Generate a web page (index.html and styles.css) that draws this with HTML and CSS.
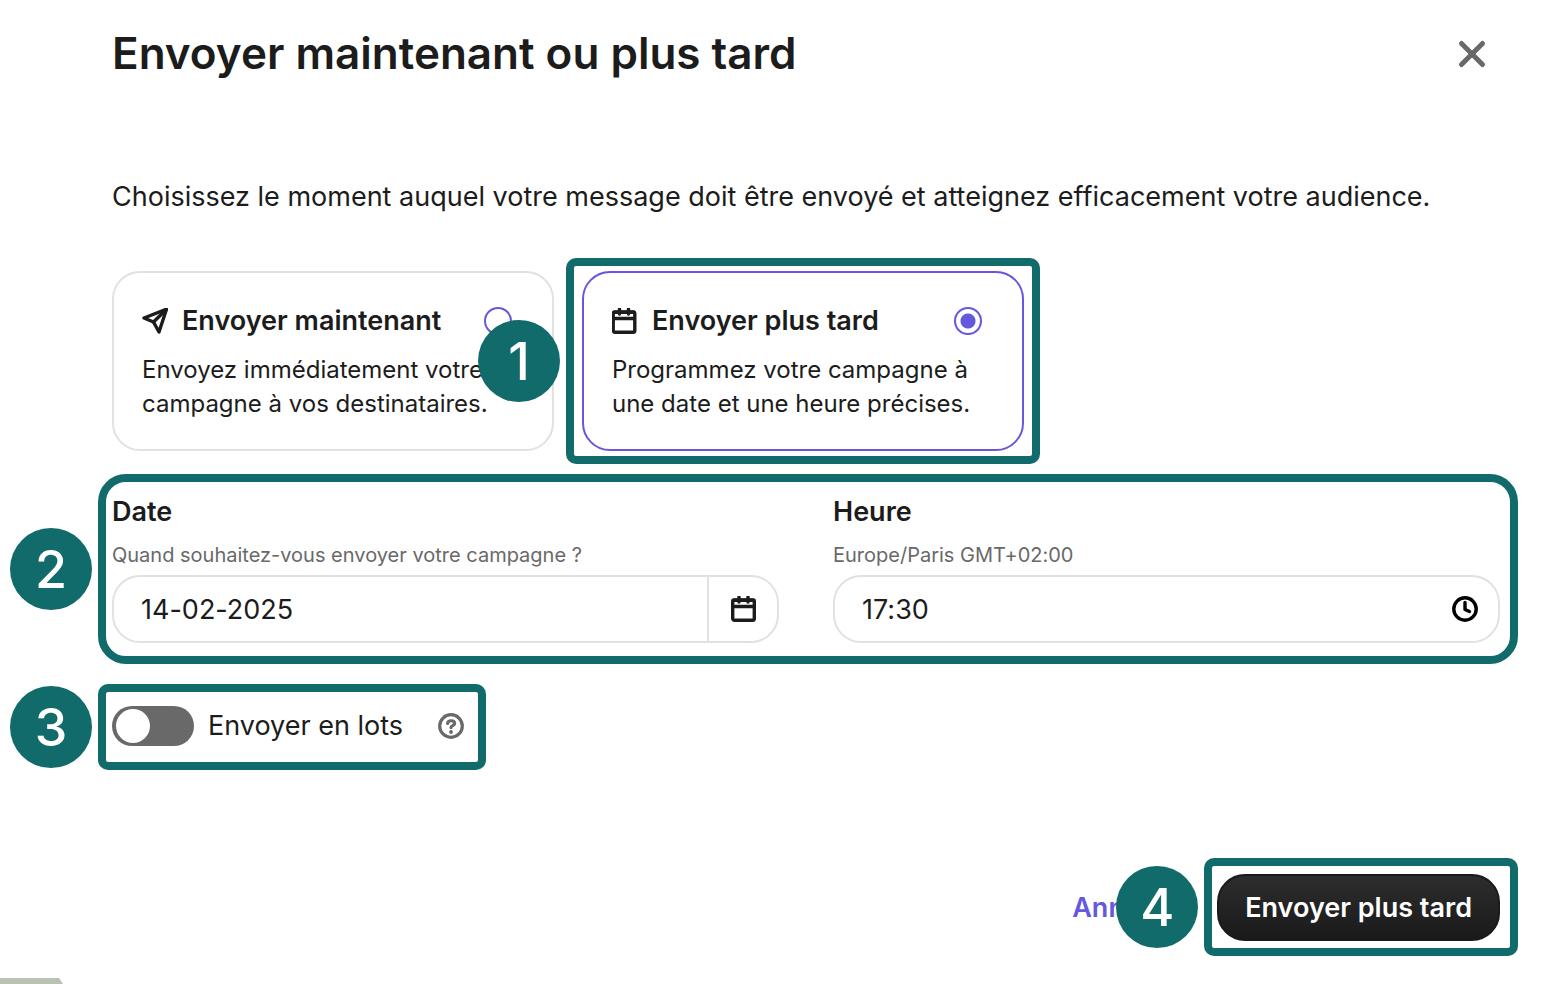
FILE: index.html
```
<!DOCTYPE html>
<html lang="fr">
<head>
    <meta charset="UTF-8">
    <meta name="viewport" content="width=device-width, initial-scale=1.0">
    <title>Envoyer maintenant ou plus tard</title>
    <link rel="stylesheet" href="styles.css">
</head>
<body>

    <form class="dialog">
        <header class="header">
            <h1 class="title">Envoyer maintenant ou plus tard</h1>
            <button type="button" class="close" aria-label="Fermer">
                <svg width="26" height="26" viewBox="0 0 26 26" fill="none" stroke="#696969" stroke-width="5" stroke-linecap="round">
                    <path d="M2.500 3.500 23.500 24.500M23.500 3.500 2.500 24.500"/>
                </svg>
            </button>
        </header>

        <p class="intro">Choisissez le moment auquel votre message doit être envoyé et atteignez efficacement votre audience.</p>

        <div class="options">
            <label class="card">
                <span class="card-head">
                    <svg class="icon" viewBox="0 0 26 26" fill="none" stroke="#1c1c1c" stroke-width="3.400" stroke-linejoin="round" stroke-linecap="round">
                        <path d="M2 10 24.500 1.200 17 24 11.500 14Z"/>
                        <path d="M11.500 14 24 1.700"/>
                    </svg>
                    <span class="card-title">Envoyer maintenant</span>
                    <input type="radio" name="moment" class="radio">
                </span>
                <span class="card-text">Envoyez immédiatement votre campagne à vos destinataires.</span>
                <span class="badge badge-card">1</span>
            </label>

            <label class="card selected">
                <span class="card-head">
                    <svg class="icon" viewBox="0 0 26 26" fill="none" stroke="#1c1c1c" stroke-width="3.400" stroke-linecap="round">
                        <rect x="1.200" y="4" width="21.600" height="20.300" rx="1.800"/>
                        <path d="M2 4.300H22M2 10.500H22M7.500 1V6M16.500 1V6"/>
                    </svg>
                    <span class="card-title">Envoyer plus tard</span>
                    <input type="radio" name="moment" class="radio" checked>
                </span>
                <span class="card-text">Programmez votre campagne à une date et une heure précises.</span>
                <span class="frame frame-card"></span>
            </label>
        </div>

        <div class="schedule">
            <div class="field">
                <label class="label" for="date">Date</label>
                <span class="hint">Quand souhaitez-vous envoyer votre campagne ?</span>
                <div class="input-box">
                    <input type="text" id="date" class="input" value="14-02-2025">
                    <button type="button" class="picker" aria-label="Calendrier">
                        <svg class="icon" viewBox="0 0 26 26" fill="none" stroke="#1c1c1c" stroke-width="3.400" stroke-linecap="round">
                            <rect x="2.700" y="4" width="21.600" height="20.300" rx="1.800"/>
                            <path d="M3 4.300H24M3 10.500H24M9 1V6M18 1V6"/>
                        </svg>
                    </button>
                </div>
            </div>
            <div class="field">
                <label class="label" for="heure">Heure</label>
                <span class="hint">Europe/Paris GMT+02:00</span>
                <div class="input-box">
                    <input type="text" id="heure" class="input" value="17:30">
                    <svg class="icon clock" viewBox="0 0 26 26" fill="none" stroke="#000" stroke-width="3.400" stroke-linecap="round" stroke-linejoin="round">
                        <circle cx="13" cy="13" r="11.200"/>
                        <path d="M13 6.500V13.500L17.500 15.500"/>
                    </svg>
                </div>
            </div>
            <span class="frame frame-schedule"></span>
            <span class="badge badge-left">2</span>
        </div>

        <div class="batch">
            <input type="checkbox" id="lots" class="toggle">
            <label class="batch-label" for="lots">Envoyer en lots</label>
            <button type="button" class="help" aria-label="Aide">
                <svg class="icon" viewBox="0 0 26 26" fill="none" stroke="#696969" stroke-width="3.200" stroke-linecap="round" stroke-linejoin="round">
                    <circle cx="13" cy="13" r="11.300"/>
                    <path d="M9.600 10.500C10 6.800 16.600 6.800 16.600 10.500C16.600 12.800 13 12.600 13 14.600"/>
                    <circle cx="13" cy="19" r="1.900" fill="#696969" stroke="none"/>
                </svg>
            </button>
            <span class="frame frame-batch"></span>
            <span class="badge badge-left">3</span>
        </div>

        <footer class="footer">
            <button type="button" class="cancel">Annuler</button>
            <div class="submit-wrap">
                <button type="submit" class="submit">Envoyer plus tard</button>
                <span class="frame frame-submit"></span>
                <span class="badge badge-submit">4</span>
            </div>
        </footer>
    </form>

    <div class="corner"></div>

</body>
</html>
```
FILE: styles.css
```
* {
    box-sizing: border-box;
}
body {
    margin: 0;
    min-height: 100vh;
    position: relative;
    overflow: hidden;
    background: #fff;
    color: #1c1c1c;
    font-family: Inter, "Liberation Sans", sans-serif;
    font-size: 27px;
    font-variant-ligatures: none;
}
button {
    padding: 0;
    border: none;
    background: none;
    font: inherit;
    cursor: pointer;
}
.dialog {
    padding: 28px 42px 0 112px;
}
.icon {
    display: block;
    flex: none;
    width: 26px;
    height: 26px;
}

/* header */
.header {
    display: flex;
    align-items: center;
    justify-content: space-between;
    padding-right: 15px;
    margin-bottom: 99px;
}
.title {
    margin: 0;
    font-size: 44px;
    line-height: 50px;
    font-weight: 600;
}
.close svg {
    display: block;
    overflow: visible;
}
.intro {
    margin: 0 0 54px;
    line-height: 40px;
}

/* cards */
.options {
    display: grid;
    grid-template-columns: repeat(auto-fill, 442px);
    gap: 28px;
}
.card {
    position: relative;
    padding: 28px;
    border: 2px solid #e1e1e1;
    border-radius: 28px;
    cursor: pointer;
}
.selected {
    border-color: #6558dd;
}
.card-head {
    display: flex;
    align-items: center;
    gap: 14px;
    padding-right: 12px;
    margin-bottom: 12px;
}
.card-title {
    flex: 1;
    line-height: 40px;
    font-weight: 600;
}
.card-text {
    display: block;
    font-size: 24px;
    line-height: 34px;
}
.radio {
    appearance: none;
    flex: none;
    width: 28px;
    height: 28px;
    margin: 0;
    border: 2px solid #6558dd;
    border-radius: 50%;
}
.radio:checked {
    background: radial-gradient(circle, #6558dd 7px, #fff 8px);
}

/* date and time */
.schedule {
    position: relative;
    display: grid;
    grid-template-columns: 1fr 1fr;
    gap: 54px;
    margin-top: 42px;
}
.label {
    display: block;
    line-height: 38px;
    margin-bottom: 10px;
    font-weight: 600;
}
.hint {
    display: block;
    margin-bottom: 6px;
    color: #696969;
    font-size: 20px;
    line-height: 28px;
}
.input-box {
    display: flex;
    align-items: center;
    height: 68px;
    border: 2px solid #e1e1e1;
    border-radius: 28px;
}
.input {
    flex: 1;
    min-width: 0;
    height: 64px;
    padding: 0 27px;
    border: none;
    outline: none;
    background: none;
    color: inherit;
    font: inherit;
}
.picker {
    display: flex;
    align-items: center;
    justify-content: center;
    width: 70px;
    height: 64px;
    border-left: 2px solid #e1e1e1;
}
.clock {
    margin-right: 20px;
}

/* batch toggle */
.batch {
    position: relative;
    display: flex;
    align-items: center;
    width: fit-content;
    margin-top: 63px;
}
.toggle {
    appearance: none;
    width: 82px;
    height: 40px;
    margin: 0;
    padding: 3px 4px;
    border-radius: 20px;
    background: #696969;
    cursor: pointer;
}
.toggle::before {
    content: "";
    display: block;
    width: 34px;
    height: 34px;
    border-radius: 50%;
    background: #fff;
}
.toggle:checked::before {
    margin-left: auto;
}
.batch-label {
    margin: 0 35px 0 14px;
    line-height: 40px;
}

/* footer */
.footer {
    display: flex;
    justify-content: flex-end;
    align-items: center;
    gap: 42px;
    margin-top: 128px;
}
.cancel {
    color: #6558dd;
    font-weight: 600;
}
.submit-wrap {
    position: relative;
}
.submit {
    display: block;
    height: 67px;
    padding: 0 26px;
    border: 2px solid #1a1a1a;
    border-radius: 28px;
    background: linear-gradient(#2d2d2d, #1a1a1a);
    color: #fff;
    font-weight: 600;
}

/* numbered steps */
.frame {
    position: absolute;
    border: 8px solid #116b6a;
    border-radius: 10px;
    pointer-events: none;
}
.frame-card {
    inset: -15px -18px;
}
.frame-schedule {
    inset: -19px -18px -21px -14px;
    border-radius: 28px;
}
.frame-batch {
    inset: -22px -22px -24px -14px;
}
.frame-submit {
    inset: -16px -18px -15px -13px;
}
.badge {
    position: absolute;
    width: 82px;
    height: 82px;
    border-radius: 50%;
    background: #116b6a;
    color: #fff;
    font-size: 52px;
    font-weight: 500;
    line-height: 84px;
    text-align: center;
}
.badge-card {
    top: 47px;
    right: -8px;
}
.badge-left {
    left: -102px;
    top: calc(50% - 40px);
}
.badge-submit {
    left: -101px;
    top: -8px;
}

.corner {
    position: absolute;
    left: 0;
    bottom: 0;
    width: 63px;
    height: 6px;
    background: #b8c2b3;
    clip-path: polygon(0 0, 59px 0, 100% 100%, 0 100%);
}
```
